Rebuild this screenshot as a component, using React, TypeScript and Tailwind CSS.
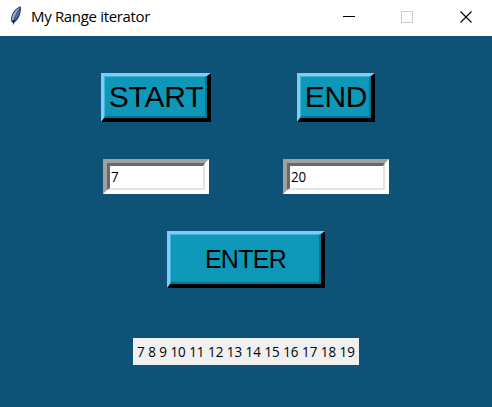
import React from 'react';

type BevelProps = { className: string; inner: string; children: React.ReactNode };

function Bevel({ className, inner, children }: BevelProps) {
  return (
    <div className={`shrink-0 ${className}`}>
      <div className={`h-full w-full ${inner}`}>{children}</div>
    </div>
  );
}

const raised = "border-t-[3px] border-l-[3px] border-r-[4px] border-b-[4px] border-t-[#7bcdfb] border-l-[#7bcdfb] border-r-black border-b-black";
const raisedInner = "flex items-center justify-center border-t border-l border-r-2 border-b-2 border-t-[#47b3d5] border-l-[#47b3d5] border-r-[#08748e] border-b-[#08748e] bg-[#0d98ba]";
const sunken = "h-[35px] w-[106px] border-4 border-t-[#a0a0a0] border-l-[#a0a0a0] border-r-white border-b-white";
const sunkenInner = "flex items-center border-t-[3px] border-l-[3px] border-r-2 border-b-2 border-t-[#696969] border-l-[#696969] border-r-[#e3e3e3] border-b-[#e3e3e3] bg-white";

function Feather() {
  return (
    <svg width="14" height="21" viewBox="0 0 14 21" className="mt-[5px] ml-[9px] shrink-0">
      <path d="M11.6 1.2 C12.6 5 11 11.5 8 15 L4.5 18.5 L2.4 16.5 C1 11.5 4.5 4 11.6 1.2Z" fill="#222b35" />
      <path d="M10.7 2.5 C6.5 4.5 2.8 9.5 2.9 15.5 L5 15 C7.5 11 9.5 7 10.7 2.5Z" fill="#86b5e6" />
      <path d="M11.2 3.5 C11.3 8 9 12.5 6 15.4 L5.1 14.6 C7.8 11 9.5 7 11.2 3.5Z" fill="#4377b3" />
      <path d="M9.5 5 C7 9 5 13.5 4.3 19.5" fill="none" stroke="#202020" strokeWidth="0.7" />
    </svg>
  );
}

export default function App() {
  return (
    <div className="flex h-[407px] w-[492px] flex-col overflow-hidden bg-[#0e5277] font-['Open_Sans',sans-serif] text-black">
      <header className="flex h-9 shrink-0 bg-white">
        <Feather />
        <h1 className="ml-2 flex-1 pt-[5px] text-[15px] leading-[22px] tracking-[-0.33px] whitespace-nowrap">My Range iterator</h1>
        <svg width="150" height="36" viewBox="342 0 150 36" fill="none" shapeRendering="crispEdges">
          <path d="M343 16.5H355" stroke="#000" />
          <rect x="401.5" y="11.5" width="11" height="11" stroke="#ccc" />
          <path d="M460.5 11.5L471.5 22.5M471.5 11.5L460.5 22.5" stroke="#000" strokeWidth="1.1" shapeRendering="auto" />
        </svg>
      </header>
      <main className="flex flex-col">
        <div className="mt-[37px] ml-[101px] flex gap-[86px] font-['Liberation_Sans',Arial,sans-serif] text-[30px]">
          <Bevel className={`h-[49px] w-[110px] ${raised}`} inner={raisedInner}><span className="pb-px pl-[2px] tracking-[-0.2px]">START</span></Bevel>
          <Bevel className={`h-[49px] w-[78px] ${raised}`} inner={raisedInner}><span className="pb-px pl-[2px] tracking-[-0.3px]">END</span></Bevel>
        </div>
        <div className="mt-[37px] ml-[103px] flex gap-[74px] text-[15px] leading-5">
          <Bevel className={sunken} inner={sunkenInner}><span className="origin-left scale-x-[0.89] pb-[2px] pl-px">7</span></Bevel>
          <Bevel className={sunken} inner={sunkenInner}><span className="origin-left scale-x-[0.89] pb-[2px] pl-px">20</span></Bevel>
        </div>
        <div className="mt-[37px] ml-[167px] flex font-['Liberation_Sans',Arial,sans-serif] text-[25px]">
          <Bevel className={`h-[57px] w-[158px] ${raised}`} inner={raisedInner}><span className="pt-[2px] pl-px tracking-[-0.7px]">ENTER</span></Bevel>
        </div>
        <output className="mt-[50px] ml-[133px] flex h-[27px] w-[226px] items-center bg-[#f0f0f0] pb-[2px] pl-1 text-[15px] leading-5 whitespace-nowrap">
          <span className="origin-left scale-x-[0.893]">7 8 9 10 11 12 13 14 15 16 17 18 19</span>
        </output>
      </main>
    </div>
  );
}
